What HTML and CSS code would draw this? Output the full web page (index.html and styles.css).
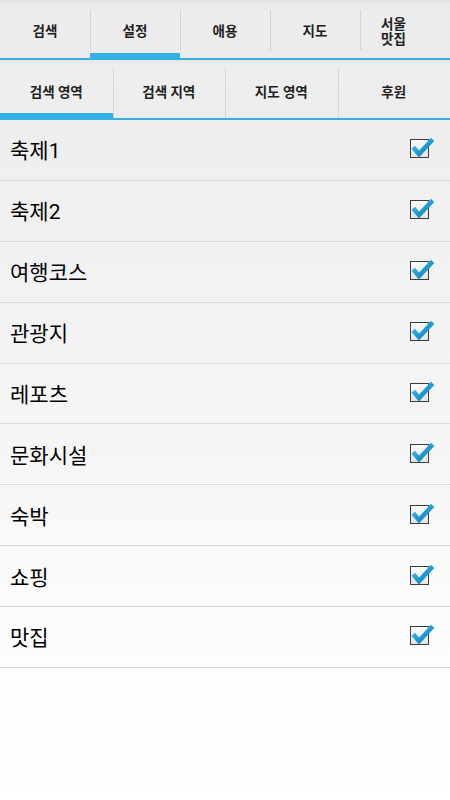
FILE: index.html
```html
<!DOCTYPE html>
<html lang="ko">
<head>
<meta charset="utf-8">
<title>설정</title>
<link rel="stylesheet" href="styles.css">
</head>
<body>
<svg class="defs" width="0" height="0" aria-hidden="true">
  <defs>
    <linearGradient id="boxfill" x1="0" y1="0" x2="0" y2="1">
      <stop offset="0" stop-color="#fbfbfb"/>
      <stop offset="1" stop-color="#e4e4e4"/>
    </linearGradient>
    <linearGradient id="tick" x1="0" y1="0" x2="1" y2="1">
      <stop offset="0" stop-color="#4cc3ee"/>
      <stop offset="0.55" stop-color="#1e9bd2"/>
      <stop offset="1" stop-color="#127bb0"/>
    </linearGradient>
  </defs>
</svg>

<nav class="tabs">
  <div class="tab"><span class="label">검색</span></div>
  <div class="tab active"><span class="label">설정</span></div>
  <div class="tab"><span class="label">애용</span></div>
  <div class="tab"><span class="label">지도</span></div>
  <div class="tab"><span class="label multi">서울 맛집</span></div>
</nav>

<nav class="subtabs">
  <div class="subtab active">검색 영역</div>
  <div class="subtab">검색 지역</div>
  <div class="subtab">지도 영역</div>
  <div class="subtab">후원</div>
</nav>

<ul class="list">
  <li class="row"><span class="name">축제1</span><svg class="check" viewBox="0 0 26 25" width="26" height="25"><rect x="1.5" y="4.5" width="18" height="18" fill="url(#boxfill)" stroke="#3c3c3c"/><path d="M4.2 12.2 L10 19 L23.6 4.4" fill="none" stroke="url(#tick)" stroke-width="4.6"/></svg></li>
  <li class="row"><span class="name">축제2</span><svg class="check" viewBox="0 0 26 25" width="26" height="25"><rect x="1.5" y="4.5" width="18" height="18" fill="url(#boxfill)" stroke="#3c3c3c"/><path d="M4.2 12.2 L10 19 L23.6 4.4" fill="none" stroke="url(#tick)" stroke-width="4.6"/></svg></li>
  <li class="row"><span class="name">여행코스</span><svg class="check" viewBox="0 0 26 25" width="26" height="25"><rect x="1.5" y="4.5" width="18" height="18" fill="url(#boxfill)" stroke="#3c3c3c"/><path d="M4.2 12.2 L10 19 L23.6 4.4" fill="none" stroke="url(#tick)" stroke-width="4.6"/></svg></li>
  <li class="row"><span class="name">관광지</span><svg class="check" viewBox="0 0 26 25" width="26" height="25"><rect x="1.5" y="4.5" width="18" height="18" fill="url(#boxfill)" stroke="#3c3c3c"/><path d="M4.2 12.2 L10 19 L23.6 4.4" fill="none" stroke="url(#tick)" stroke-width="4.6"/></svg></li>
  <li class="row"><span class="name">레포츠</span><svg class="check" viewBox="0 0 26 25" width="26" height="25"><rect x="1.5" y="4.5" width="18" height="18" fill="url(#boxfill)" stroke="#3c3c3c"/><path d="M4.2 12.2 L10 19 L23.6 4.4" fill="none" stroke="url(#tick)" stroke-width="4.6"/></svg></li>
  <li class="row"><span class="name">문화시설</span><svg class="check" viewBox="0 0 26 25" width="26" height="25"><rect x="1.5" y="4.5" width="18" height="18" fill="url(#boxfill)" stroke="#3c3c3c"/><path d="M4.2 12.2 L10 19 L23.6 4.4" fill="none" stroke="url(#tick)" stroke-width="4.6"/></svg></li>
  <li class="row"><span class="name">숙박</span><svg class="check" viewBox="0 0 26 25" width="26" height="25"><rect x="1.5" y="4.5" width="18" height="18" fill="url(#boxfill)" stroke="#3c3c3c"/><path d="M4.2 12.2 L10 19 L23.6 4.4" fill="none" stroke="url(#tick)" stroke-width="4.6"/></svg></li>
  <li class="row"><span class="name">쇼핑</span><svg class="check" viewBox="0 0 26 25" width="26" height="25"><rect x="1.5" y="4.5" width="18" height="18" fill="url(#boxfill)" stroke="#3c3c3c"/><path d="M4.2 12.2 L10 19 L23.6 4.4" fill="none" stroke="url(#tick)" stroke-width="4.6"/></svg></li>
  <li class="row"><span class="name">맛집</span><svg class="check" viewBox="0 0 26 25" width="26" height="25"><rect x="1.5" y="4.5" width="18" height="18" fill="url(#boxfill)" stroke="#3c3c3c"/><path d="M4.2 12.2 L10 19 L23.6 4.4" fill="none" stroke="url(#tick)" stroke-width="4.6"/></svg></li>
</ul>
</body>
</html>
```

FILE: styles.css
```css
* {
  box-sizing: border-box;
}

html, body {
  margin: 0;
  padding: 0;
  background: #ffffff;
}

body {
  width: 450px;
  min-height: 800px;
  font-family: Roboto, "Noto Sans CJK KR", sans-serif;
  color: #111111;
  overflow: hidden;
}

.defs {
  position: absolute;
  width: 0;
  height: 0;
  overflow: hidden;
}

/* top tabs */
.tabs {
  display: grid;
  grid-template-columns: repeat(5, 1fr);
  height: 60px;
  background: linear-gradient(#dedede 0, #e9e9e9 4px, #ededed 12px, #ebebeb 100%);
}

.tab {
  position: relative;
  display: flex;
  align-items: center;
  justify-content: center;
  padding-top: 3px;
  box-shadow: inset 0 -2px 0 #36b0de;
  font-size: 13.5px;
  font-weight: 700;
  color: #1e1e1e;
  line-height: 15px;
}

.tab + .tab::before {
  content: "";
  position: absolute;
  left: 0;
  top: 10px;
  bottom: 10px;
  width: 1px;
  background: #d2d2d2;
}

.tab.active {
  box-shadow: inset 0 -7px 0 #33b1e2;
}

.label.multi {
  width: 48px;
  text-align: left;
  word-break: keep-all;
}

/* sub tabs */
.subtabs {
  display: grid;
  grid-template-columns: repeat(4, 1fr);
  height: 60px;
  background: linear-gradient(#e6e6e6 0, #eeeeee 6px, #ededed 100%);
}

.subtab {
  position: relative;
  display: flex;
  align-items: center;
  justify-content: center;
  padding-top: 2px;
  box-shadow: inset 0 -2px 0 #36b0de;
  font-size: 13.5px;
  font-weight: 700;
  color: #1e1e1e;
}

.subtab + .subtab::before {
  content: "";
  position: absolute;
  left: 0;
  top: 8px;
  bottom: 2px;
  width: 1px;
  background: #d6d6d6;
}

.subtab.active {
  box-shadow: inset 0 -7px 0 #33b1e2;
}

/* list */
.list {
  list-style: none;
  margin: 0;
  padding: 0;
  min-height: 680px;
  background: linear-gradient(#eeeeee 0, #f6f6f6 50%, #fdfdfd 80%, #ffffff 100%);
}

.row {
  display: flex;
  align-items: center;
  justify-content: space-between;
  height: 60.875px;
  padding: 0 15px 1px 10px;
  border-bottom: 1px solid #d9d9d9;
}

.name {
  font-size: 21px;
  font-weight: 400;
  color: #000000;
}

.check {
  display: block;
  flex: none;
  margin-top: -3px;
}
```
